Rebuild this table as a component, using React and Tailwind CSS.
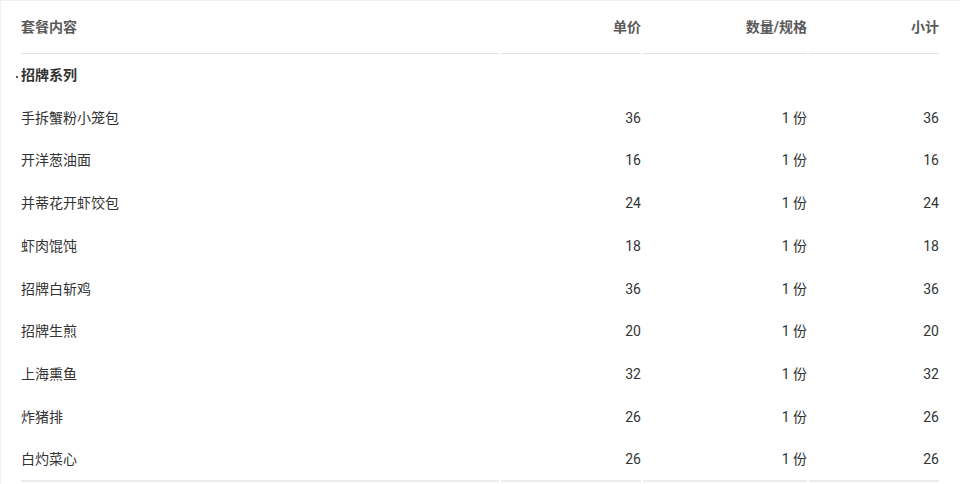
import React from "react";

const items = [
  { name: "手拆蟹粉小笼包", price: 36, qty: "1 份" },
  { name: "开洋葱油面", price: 16, qty: "1 份" },
  { name: "并蒂花开虾饺包", price: 24, qty: "1 份" },
  { name: "虾肉馄饨", price: 18, qty: "1 份" },
  { name: "招牌白斩鸡", price: 36, qty: "1 份" },
  { name: "招牌生煎", price: 20, qty: "1 份" },
  { name: "上海熏鱼", price: 32, qty: "1 份" },
  { name: "炸猪排", price: 26, qty: "1 份" },
  { name: "白灼菜心", price: 26, qty: "1 份" },
];

export default function App() {
  return (
    <div
      className="w-[960px] h-[484px] bg-white border-t border-l border-[#f0f0f0] overflow-hidden"
      style={{ fontFamily: 'Roboto, "Noto Sans CJK SC", sans-serif' }}
    >
      <table className="ml-[18px] w-[922px] border-separate border-spacing-x-[2px] border-spacing-y-0 text-[14px] table-fixed">
        <colgroup>
          <col className="w-[478px]" />
          <col className="w-[140px]" />
          <col className="w-[164px]" />
          <col className="w-[130px]" />
        </colgroup>
        <thead>
          {/* header */}
          <tr className="h-[53px] text-[#5a5a5a] font-bold">
            <th className="p-0 text-left align-middle border-b border-[#e2e2e2]">套餐内容</th>
            <th className="p-0 text-right align-middle border-b border-[#e2e2e2]">单价</th>
            <th className="p-0 text-right align-middle border-b border-[#e2e2e2]">数量/规格</th>
            <th className="p-0 text-right align-middle border-b border-[#e2e2e2]">小计</th>
          </tr>
        </thead>
        <tbody className="text-[#333]">
          <tr className="h-[42.75px]">
            <td className="p-0 align-middle font-bold relative">
              <span className="absolute left-[-5px] top-1/2 mt-[1px] w-[2px] h-[2px] bg-[#555]" />
              招牌系列
            </td>
            <td className="p-0" />
            <td className="p-0" />
            <td className="p-0" />
          </tr>
          {items.map((item, i) => {
            const last = i === items.length - 1;
            const line = last ? "border-b-2 border-[#ececec]" : "";
            return (
              <tr key={item.name} className="h-[42.75px]">
                <td className={`p-0 align-middle ${line}`}>{item.name}</td>
                <td className={`p-0 align-middle text-right ${line}`}>{item.price}</td>
                <td className={`p-0 align-middle text-right ${line}`}>{item.qty}</td>
                <td className={`p-0 align-middle text-right ${line}`}>{item.price}</td>
              </tr>
            );
          })}
        </tbody>
      </table>
    </div>
  );
}
